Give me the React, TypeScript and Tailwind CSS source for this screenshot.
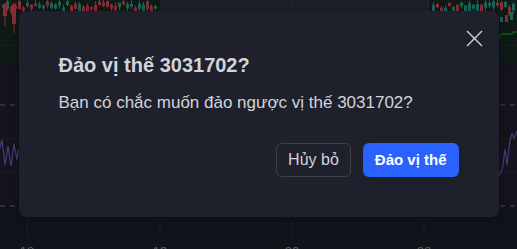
import React from "react";

function rand(seed: number) {
  let s = seed;
  return () => {
    s = (s * 9301 + 49297) % 233280;
    return s / 233280;
  };
}

function Candles({ x0, x1, yTop, yBot, seed }: { x0: number; x1: number; yTop: number; yBot: number; seed: number }) {
  const r = rand(seed);
  const items: React.ReactNode[] = [];
  for (let x = x0; x < x1; x += 4) {
    const up = r() > 0.5;
    const a = yTop + r() * (yBot - yTop);
    const h = 2 + r() * 6;
    const wickTop = a - r() * 4;
    const wickBot = a + h + r() * 4;
    const c = up ? "#17665a" : "#8c2a37";
    items.push(
      <g key={x}>
        <line x1={x + 1.5} x2={x + 1.5} y1={wickTop} y2={wickBot} stroke={c} strokeWidth={1} />
        <rect x={x} y={a} width={3} height={h} fill={c} />
      </g>
    );
  }
  return <g>{items}</g>;
}

function Chart() {
  return (
    <svg width={517} height={249} viewBox="0 0 517 249" className="block">
      <rect width={517} height={249} fill="#11131a" />
      <rect x={0} y={0} width={161} height={62} fill="#0f1916" />
      <rect x={161} y={0} width={267} height={11} fill="#1c1f28" />
      <rect x={428} y={0} width={89} height={62} fill="#0f1916" />
      <line x1={292} x2={292} y1={0} y2={11} stroke="#262a34" />
      <line x1={161} x2={161} y1={0} y2={11} stroke="#1f2a26" />
      <line x1={428} x2={428} y1={0} y2={11} stroke="#262a34" />
      <Candles x0={2} x1={158} yTop={1} yBot={8} seed={7} />
      <Candles x0={432} x1={516} yTop={1} yBot={8} seed={19} />
      <line x1={5} x2={5} y1={3} y2={26} stroke="#8c2a37" />
      <rect x={3} y={4} width={4} height={12} fill="#8c2a37" />
      <line x1={14} x2={14} y1={3} y2={33} stroke="#8c2a37" />
      <rect x={12} y={4} width={4} height={20} fill="#8c2a37" />
      <rect x={505} y={15} width={3} height={7} fill="#8c2a37" />
      <rect x={510} y={12} width={3} height={8} fill="#17665a" />
      <rect x={500} y={17} width={3} height={5} fill="#17665a" />
      <polyline points="498,38 502,34 512,34 514,32 517,32" fill="none" stroke="#0d4d1a" strokeWidth={2} />
      <line x1={0} x2={517} y1={45} y2={45} stroke="#18221f" />
      <rect x={0} y={62} width={517} height={6} fill="#121419" />
      <rect x={0} y={68} width={517} height={138} fill="#15141d" />
      <line x1={0} x2={517} y1={105} y2={105} stroke="#4a4c55" strokeDasharray="5 5" />
      <line x1={0} x2={517} y1={139} y2={139} stroke="#1d1c26" />
      <line x1={0} x2={517} y1={172} y2={172} stroke="#1d1c26" />
      <line x1={0} x2={517} y1={206} y2={206} stroke="#4a4c55" strokeDasharray="5 5" />
      <polyline points="0,148 2,140 5,165 8,146 11,166 14,144 17,160 18,150" fill="none" stroke="#4b3a80" strokeWidth={1.2} />
      <polyline points="498,177 501,172 503,165 505,149 507,165 510,140 512,134 514,138 517,131" fill="none" stroke="#4b3a80" strokeWidth={1.2} />
      {[27, 160, 292, 424].map((x) => (
        <line key={x} x1={x} x2={x} y1={206} y2={238} stroke="#1b1e26" />
      ))}
      <rect x={287} y={216} width={2} height={2} fill="#3b2f63" />
      {[
        [27, "18"],
        [160, "19"],
        [292, "20"],
        [424, "22"],
      ].map(([x, t]) => (
        <text key={t as string} x={x as number} y={256} textAnchor="middle" fontFamily="Liberation Sans, Arial, sans-serif" fontSize={13} fill="#5d606a">
          {t}
        </text>
      ))}
    </svg>
  );
}

export default function App() {
  return (
    <div className="relative w-[517px] h-[249px] overflow-hidden bg-[#11131a] font-['Liberation_Sans',Arial,sans-serif]">
      <Chart />
      <div className="absolute inset-0 flex justify-center items-start pt-[11px]">
        <div className="relative w-[480px] h-[206px] rounded-lg bg-[#1e212b] shadow-[0_2px_8px_rgba(0,0,0,0.35)] px-10 pt-[42px] pb-10 flex flex-col">
          <button className="absolute top-[19px] right-[16px] w-[17px] h-[17px] flex items-center justify-center">
            <svg width="17" height="17" viewBox="0 0 17 17">
              <path d="M1 1L16 16M16 1L1 16" stroke="#d1d4dc" strokeWidth="1.4" />
            </svg>
          </button>
          <h2 className="text-[20px] leading-6 font-bold text-[#d1d4dc]">Đảo vị thế 3031702?</h2>
          <p className="mt-[14px] text-[17px] leading-6 text-[#d1d4dc]">Bạn có chắc muốn đảo ngược vị thế 3031702?</p>
          <div className="mt-auto flex justify-end gap-3">
            <button className="h-[34px] px-[11px] rounded-md border border-[#3d414d] text-[16px] text-[#d1d4dc]">
              Hủy bỏ
            </button>
            <button className="h-[34px] px-3 rounded-md bg-[#2962ff] text-[15px] font-bold text-white">
              Đảo vị thế
            </button>
          </div>
        </div>
      </div>
    </div>
  );
}
